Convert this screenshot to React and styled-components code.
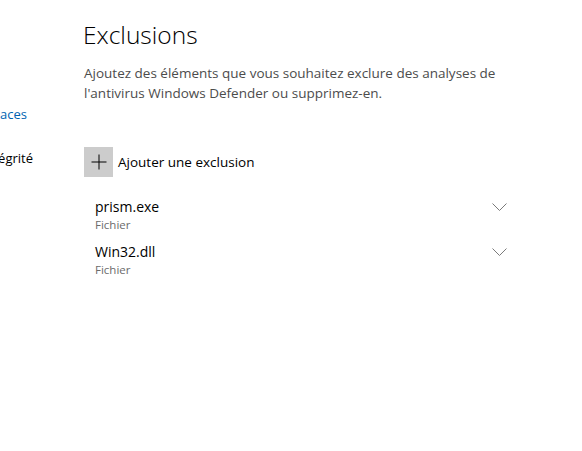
import React from "react";
import styled, { createGlobalStyle } from "styled-components";

const GlobalStyle = createGlobalStyle`
    html, body {
        margin: 0;
        padding: 0;
        background: #ffffff;
        overflow: hidden;
    }
    body {
        font-family: "Open Sans", "Noto Sans", "Liberation Sans", sans-serif;
        color: #000000;
    }
`;

const Page = styled.div`
    display: flex;
    width: 582px;
    height: 451px;
    background: #ffffff;
`;

const Sidebar = styled.nav`
    width: 83px;
    flex-shrink: 0;
    overflow: hidden;
    padding-top: 105px;
    display: flex;
    flex-direction: column;
    gap: 25px;
`;

const NavItem = styled.div`
    display: flex;
    justify-content: flex-end;
    padding-right: ${p => p.$inset}px;
    white-space: nowrap;
    font-size: 13px;
    line-height: 19px;
    color: ${p => (p.$active ? "#0063b1" : "#000000")};
`;

const Main = styled.main`
    flex: 1;
    padding-top: 17px;
    display: flex;
    flex-direction: column;
`;

const Title = styled.h1`
    margin: 0;
    font-size: 24.5px;
    font-weight: 300;
    line-height: 36px;
    color: #000000;
`;

const Description = styled.p`
    margin: 10px 0 0 1px;
    width: 420px;
    font-size: 13.5px;
    line-height: 20px;
    color: #4c4c4c;
`;

const AddButton = styled.button`
    display: flex;
    align-items: center;
    gap: 5px;
    margin: 44px 0 0 1px;
    padding: 0;
    border: none;
    background: transparent;
    font-family: inherit;
    font-size: 13.5px;
    color: #000000;
    cursor: pointer;
    align-self: flex-start;
`;

const PlusBox = styled.span`
    width: 29px;
    height: 30px;
    background: #cccccc;
    display: flex;
    align-items: center;
    justify-content: center;
`;

const List = styled.ul`
    list-style: none;
    margin: 20px 0 0 12px;
    padding: 0;
    width: 412px;
    display: flex;
    flex-direction: column;
    gap: 9px;
`;

const Item = styled.li`
    display: flex;
    justify-content: space-between;
    align-items: flex-start;
    height: 36px;
`;

const ItemInfo = styled.div`
    display: flex;
    flex-direction: column;
`;

const ItemName = styled.div`
    font-size: 14px;
    line-height: 20px;
    color: #000000;
`;

const ItemType = styled.div`
    font-size: 11.5px;
    line-height: 16px;
    color: #6b6b6b;
`;

const Chevron = styled.svg`
    margin-top: 6px;
    flex-shrink: 0;
`;

const exclusions = [
    { name: "prism.exe", type: "Fichier" },
    { name: "Win32.dll", type: "Fichier" },
];

export default function App() {
    return (
        <Page>
            <GlobalStyle />
            <Sidebar>
                <NavItem $active $inset={56}>Protection contre les virus et menaces</NavItem>
                <NavItem $inset={50}>Performances et intégrité</NavItem>
            </Sidebar>
            <Main>
                <Title>Exclusions</Title>
                <Description>
                    Ajoutez des éléments que vous souhaitez exclure des analyses de
                    l'antivirus Windows Defender ou supprimez-en.
                </Description>
                <AddButton>
                    <PlusBox>
                        <svg width="16" height="16" viewBox="0 0 16 16">
                            <path d="M8 0.5V15.5M0.5 8H15.5" stroke="#000" strokeWidth="1" fill="none" />
                        </svg>
                    </PlusBox>
                    Ajouter une exclusion
                </AddButton>
                <List>
                    {exclusions.map(ex => (
                        <Item key={ex.name}>
                            <ItemInfo>
                                <ItemName>{ex.name}</ItemName>
                                <ItemType>{ex.type}</ItemType>
                            </ItemInfo>
                            <Chevron width="15" height="8" viewBox="0 0 15 8">
                                <path d="M0.5 0.5L7.5 7.5L14.5 0.5" stroke="#7a7a7a" strokeWidth="1" fill="none" />
                            </Chevron>
                        </Item>
                    ))}
                </List>
            </Main>
        </Page>
    );
}
